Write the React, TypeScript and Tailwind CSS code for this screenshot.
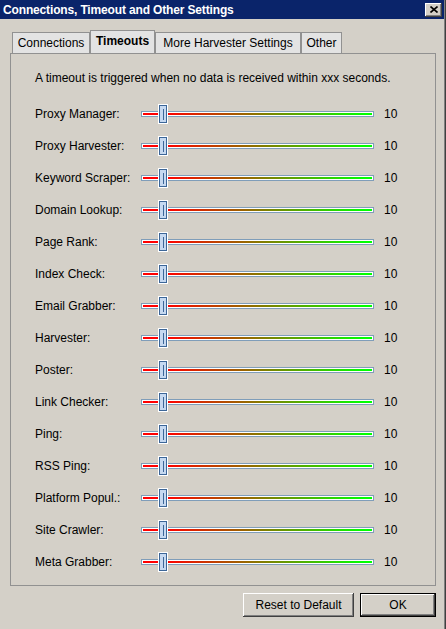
import React from "react";

const rows = [
  "Proxy Manager:",
  "Proxy Harvester:",
  "Keyword Scraper:",
  "Domain Lookup:",
  "Page Rank:",
  "Index Check:",
  "Email Grabber:",
  "Harvester:",
  "Poster:",
  "Link Checker:",
  "Ping:",
  "RSS Ping:",
  "Platform Popul.:",
  "Site Crawler:",
  "Meta Grabber:",
];

const bevel =
  "shadow-[inset_-1px_-1px_#404040,inset_1px_1px_#ffffff,inset_-2px_-2px_#808080]";

function Slider() {
  return (
    <div className="relative h-[20px] w-[233px] flex items-center">
      <div className="w-full h-[6px] border border-[#7f9db9] bg-white p-[1px]">
        <div className="h-full w-full bg-[linear-gradient(to_right,#ff0000_10%,#00ff00_97%)]" />
      </div>
      {/* thumb */}
      <div className="absolute left-[17px] top-0 h-[20px] w-[10px] border border-white">
        <div className="h-full w-full border border-[#3c6698] bg-[#c6d9f1] flex items-center justify-center">
          <div className="h-[11px] w-px bg-[#3c6698]" />
        </div>
      </div>
    </div>
  );
}

function Tab({ label, width, active }: { label: string; width: string; active?: boolean }) {
  return (
    <div
      className={`${width} ${
        active ? "h-[23px] font-bold pb-[2px]" : "h-[21px]"
      } border border-b-0 border-[#919191] bg-[#e3e3e3] flex items-center justify-center`}
    >
      {label}
    </div>
  );
}

export default function App() {
  return (
    <div className="w-[446px] h-[629px] bg-[#d4d0c8] text-black text-[12px] leading-[14px] font-['Liberation_Sans',Arial,sans-serif] shadow-[inset_-1px_0_#404040,inset_-2px_0_#808080] overflow-hidden">
      <div className="h-[19px] w-[444px] bg-[#0a246a] flex items-center justify-between pl-[3px] pr-[2px]">
        <span className="text-white font-bold text-[12px] tracking-[-0.15px]">
          Connections, Timeout and Other Settings
        </span>
        <button className={`h-[14px] w-[17px] bg-[#d4d0c8] ${bevel} flex items-center justify-center`}>
          <svg width="8" height="7" viewBox="0 0 8 7">
            <path d="M0.5 0.5 L7.5 6.5 M7.5 0.5 L0.5 6.5" stroke="#000" strokeWidth="1.6" />
          </svg>
        </button>
      </div>

      <div className="pl-[10px] pt-[11px] w-[436px]">
        <div className="flex items-end pl-[2px]">
          <Tab label="Connections" width="w-[78px]" />
          <Tab label="Timeouts" width="w-[65px]" active />
          <Tab label="More Harvester Settings" width="w-[146px]" />
          <Tab label="Other" width="w-[41px]" />
        </div>

        <div className="border border-[#919191] pt-[17px] pb-[7px] pl-[24px]">
          <p>A timeout is triggered when no data is received within xxx seconds.</p>
          <div className="mt-[13px] flex flex-col">
            {rows.map((r) => (
              <div key={r} className="h-[32px] flex items-center">
                <span className="w-[106px]">{r}</span>
                <Slider />
                <span className="ml-[10px]">10</span>
              </div>
            ))}
          </div>
        </div>

        <div className="flex justify-end gap-[6px] mt-[7px]">
          <button className={`h-[24px] w-[111px] bg-[#d4d0c8] ${bevel}`}>Reset to Default</button>
          <button className="h-[24px] w-[76px] border border-black bg-[#d4d0c8]">
            <div className={`h-full w-full flex items-center justify-center ${bevel}`}>OK</div>
          </button>
        </div>
      </div>
    </div>
  );
}
